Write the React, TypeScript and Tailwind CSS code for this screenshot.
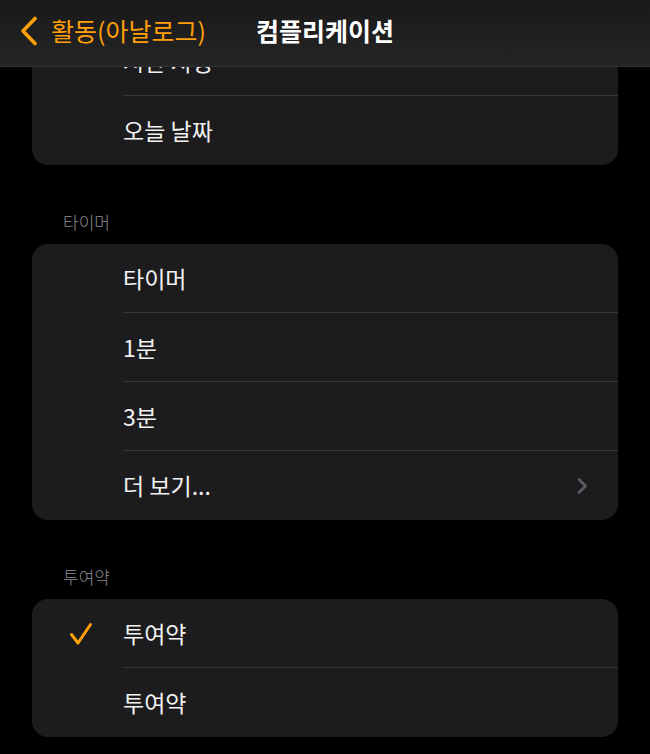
import React from 'react';

const ORANGE = 'text-[#ff9f0a]';

const BackChevron = () => (
    <svg width="20" height="30" viewBox="0 0 20 30" className="shrink-0">
        <polyline points="16,2.5 4,15 16,27.5" fill="none" stroke="#ff9f0a" strokeWidth="3.6" strokeLinecap="round" strokeLinejoin="round" />
    </svg>
);

const RowChevron = () => (
    <svg width="12" height="18" viewBox="0 0 12 18">
        <polyline points="3,2.5 9.5,9 3,15.5" fill="none" stroke="#5c5c61" strokeWidth="2.6" strokeLinecap="round" strokeLinejoin="round" />
    </svg>
);

const Check = () => (
    <svg width="24" height="24" viewBox="0 0 24 24">
        <polyline points="2.5,12.5 9,21 21.5,2.5" fill="none" stroke="#ff9f0a" strokeWidth="3" strokeLinecap="round" strokeLinejoin="round" />
    </svg>
);

interface RowProps {
    label: string;
    last?: boolean;
    checked?: boolean;
    more?: boolean;
}

const Row = ({ label, last, checked, more }: RowProps) => (
    <div className="flex h-[69px]">
        <div className="w-[91px] shrink-0 flex items-center pl-[37px]">
            {checked && <Check />}
        </div>
        <div className={`flex-1 flex items-center justify-between pr-[30px] ${last ? '' : 'border-b border-[#38383a]'}`}>
            <span className="text-[23px] text-[#f2f2f2]">{label}</span>
            {more && <RowChevron />}
        </div>
    </div>
);

const SectionHeader = ({ title }: { title: string }) => (
    <div className="pt-[46px] pb-[11px] pl-[31px] text-[17px] leading-[22px] font-light text-[#8d8d93]">{title}</div>
);

export default function App() {
    return (
        <div className="relative h-[754px] bg-black overflow-hidden font-['Noto_Sans_CJK_KR','Noto_Sans',sans-serif]">
            {/* nav bar sits over the scrolled list */}
            <div className="absolute top-0 left-0 right-0 z-10 h-[67px] pb-[4px] bg-linear-to-b from-[#191919] to-[#252525] border-b border-[#333335] grid grid-cols-[1fr_auto_1fr] items-center">
                <div className="flex items-center pl-[19px] gap-[12px]">
                    <BackChevron />
                    <span className={`text-[25px] ${ORANGE}`}>활동(아날로그)</span>
                </div>
                <div className="text-[25px] font-bold text-white">컴플리케이션</div>
                <div />
            </div>

            <div className="pt-[27px] px-[32px]">
                <div className="bg-[#1c1c1e] rounded-2xl overflow-hidden">
                    <Row label="시간 지정" />
                    <Row label="오늘 날짜" last />
                </div>

                <SectionHeader title="타이머" />
                <div className="bg-[#1c1c1e] rounded-2xl overflow-hidden">
                    <Row label="타이머" />
                    <Row label="1분" />
                    <Row label="3분" />
                    <Row label="더 보기..." more last />
                </div>

                <SectionHeader title="투여약" />
                <div className="bg-[#1c1c1e] rounded-2xl overflow-hidden">
                    <Row label="투여약" checked />
                    <Row label="투여약" last />
                </div>
            </div>
        </div>
    );
}
